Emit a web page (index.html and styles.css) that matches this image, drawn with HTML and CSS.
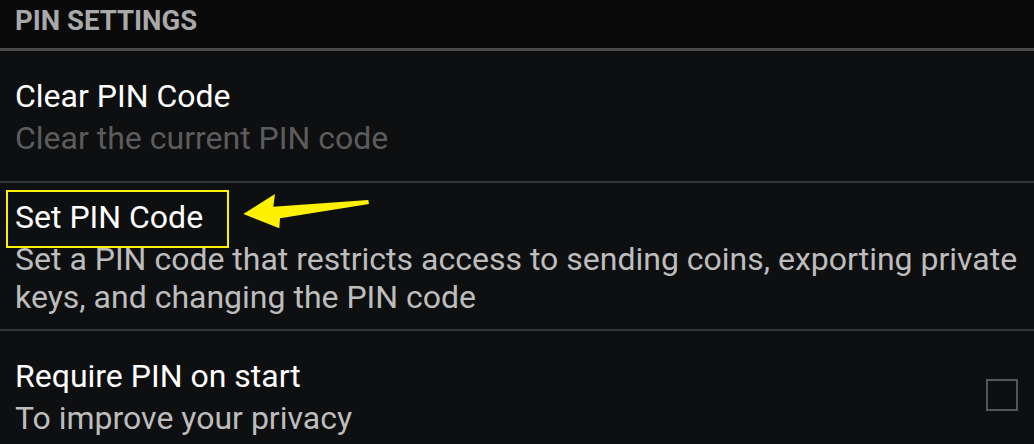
FILE: index.html
```html
<!DOCTYPE html>
<html>
<head>
<meta charset="utf-8">
<link rel="stylesheet" href="styles.css">
</head>
<body>
<div class="screen">
  <div class="header">PIN SETTINGS</div>
  <div class="item">
    <div class="text">
      <div class="title">Clear PIN Code</div>
      <div class="summary disabled">Clear the current PIN code</div>
    </div>
  </div>
  <div class="item">
    <div class="text">
      <div class="title"><span class="highlight">Set PIN Code</span></div>
      <div class="summary">Set a PIN code that restricts access to sending coins, exporting private keys, and changing the PIN code</div>
    </div>
  </div>
  <div class="item">
    <div class="text">
      <div class="title">Require PIN on start</div>
      <div class="summary">To improve your privacy</div>
    </div>
    <div class="checkbox"></div>
  </div>
  <svg class="arrow" width="1034" height="444" viewBox="0 0 1034 444">
    <polygon points="243.3,214 275,194 273.3,206.7 368.3,200 369,204 280,218.3 279.3,228.3" fill="#fff200"/>
  </svg>
</div>
</body>
</html>
```
FILE: styles.css
```css
html, body {
  margin: 0;
  padding: 0;
  background: #0e0f11;
}
.screen {
  position: relative;
  width: 1034px;
  height: 444px;
  overflow: hidden;
  background: #0e0f11;
  font-family: Roboto, "Liberation Sans", sans-serif;
}
.header {
  height: 51px;
  box-sizing: border-box;
  padding: 4px 15px 0;
  background: #0a0a0a;
  color: #a9a9a9;
  font-weight: bold;
  font-size: 27.5px;
  line-height: 34px;
  border-bottom: 3px solid #4a4a4a;
}
.item {
  display: flex;
  align-items: center;
  min-height: 132px;
  box-sizing: border-box;
  padding: 11px 12px 13px 15px;
  border-bottom: 2px solid #353638;
}
.text {
  flex: 1;
}
.title {
  color: #ffffff;
  font-size: 32px;
  line-height: 46px;
}
.summary {
  color: #bdbdbd;
  font-size: 32px;
  line-height: 38px;
}
.summary.disabled {
  color: #5c5c5c;
}
.highlight {
  position: relative;
}
.highlight::before {
  content: "";
  position: absolute;
  left: -9px;
  top: -8px;
  width: 223px;
  height: 58px;
  box-sizing: border-box;
  border: 2px solid #fff200;
}
.checkbox {
  width: 32px;
  height: 32px;
  box-sizing: border-box;
  border: 2px solid #555658;
  margin: 0 4px 0 20px;
}
.arrow {
  position: absolute;
  left: 0;
  top: 0;
  pointer-events: none;
}
```
